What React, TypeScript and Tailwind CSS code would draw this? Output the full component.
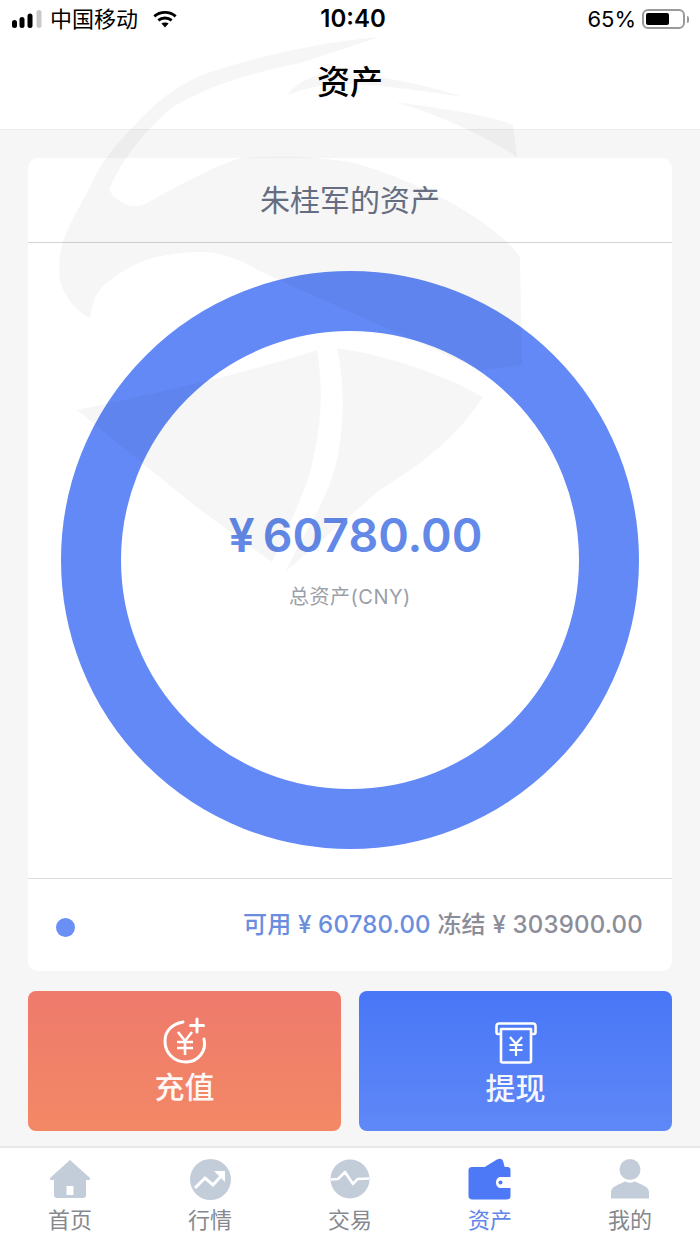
import React from "react";

const cjk = { fontFamily: '"Inter","Noto Sans CJK SC",sans-serif' };

function Watermark() {
  return (
    <svg className="absolute left-0 top-0 pointer-events-none" width="700" height="620" viewBox="0 0 700 620">
      <g fill="#000" fillOpacity="0.035">
        <path d="M380 37 C320 42 260 56 207 73 C170 88 150 108 133 127 C110 150 98 168 90 187 C75 215 62 235 60 257 C58 275 60 285 66 295 C72 305 80 314 90 318 L92 307 C95 295 100 288 107 283 C125 268 145 258 167 255 C185 252 200 251 213 253 C230 256 245 262 257 270 L290 285 L480 370 L522 365 L520 257 C505 235 470 212 433 193 C400 178 375 168 350 162 C320 157 280 155 240 158 C205 170 170 190 143 205 C135 207 128 206 123 203 C115 198 108 192 110 187 C125 155 145 130 173 107 C210 85 255 72 300 63 C325 55 355 45 380 37Z" />
        <path d="M287 95 C298 82 310 76 325 74 C350 70 420 82 463 97 C420 90 370 84 340 84 C320 85 300 90 287 95Z" />
        <path d="M395 102 C440 108 490 115 513 125 L517 157 C500 145 450 118 395 102Z" />
        <path d="M317 350 C250 372 150 395 77 410 L200 510 L272 562 L287 530 C300 500 310 480 314 455 C322 420 323 385 317 350Z" />
        <path d="M337 348 C390 356 445 375 483 397 C455 440 420 465 380 490 L285 572 L307 530 C322 505 333 480 338 455 C344 420 345 385 337 348Z" />
      </g>
    </svg>
  );
}

function Signal() {
  return (
    <svg width="30" height="18" viewBox="0 0 30 18">
      <rect x="0" y="10" width="5" height="8" rx="2.5" fill="#000" />
      <rect x="7.5" y="7" width="5" height="11" rx="2.5" fill="#000" />
      <rect x="15.5" y="3.5" width="5" height="14.5" rx="2.5" fill="#000" />
      <rect x="24.5" y="0" width="5" height="18" rx="2.5" fill="#c9c9c9" />
    </svg>
  );
}

function Wifi() {
  return (
    <svg width="24" height="18" viewBox="0 0 27 20" fill="none" stroke="#000" strokeWidth="3.2">
      <path d="M1.5 7 C8 1 19 1 25.5 7" />
      <path d="M6 11.5 C10 8 17 8 21 11.5" />
      <path d="M13.5 19.5 L9.5 15 C11.5 13.5 15.5 13.5 17.5 15Z" fill="#000" stroke="none" />
    </svg>
  );
}

function Battery() {
  return (
    <div className="flex items-center ml-[6px]">
      <div className="w-[43px] h-[20px] rounded-[6px] border-2 border-[#9a9a9a] p-[2px]">
        <div className="w-[23px] h-full rounded-[2px] bg-black" />
      </div>
      <div className="w-[2px] h-[7px] rounded-r-[2px] bg-[#9a9a9a] ml-[2px]" />
    </div>
  );
}

function Home() {
  return (
    <svg width="42" height="38" viewBox="0 0 42 38">
      <path fill="#c3cdda" d="M21 0 L41 18 C41.5 19 41 20 40 20 L37 20 L37 35 C37 37 36 38 34 38 L8 38 C6 38 5 37 5 35 L5 20 L2 20 C1 20 .5 19 1 18Z" />
      <rect x="17.5" y="26" width="7" height="9" fill="#fff" />
    </svg>
  );
}

function Market() {
  return (
    <svg width="41" height="41" viewBox="0 0 41 41">
      <circle cx="20.5" cy="20.5" r="20.5" fill="#c3cdda" />
      <path d="M5 29 L15 19 L23 26 L33 15" fill="none" stroke="#fff" strokeWidth="3" />
      <path d="M24 12 L35 12 L35 23Z" fill="#fff" />
    </svg>
  );
}

function Trade() {
  return (
    <svg width="40" height="40" viewBox="0 0 40 40">
      <circle cx="20" cy="20" r="19.5" fill="#c3cdda" />
      <path d="M1 20.5 L8 20 L15 13 L23 25 L27.5 20 L39 19.5" fill="none" stroke="#fff" strokeWidth="2.6" strokeLinejoin="round" />
    </svg>
  );
}

function Wallet() {
  return (
    <svg width="44" height="42" viewBox="0 0 44 42">
      <path fill="#4d79f6" d="M15 10 L29 1.5 C32 0 34 .5 35 3 L37 10Z" />
      <path fill="#4d79f6" d="M4 9 L39 9 C41.5 9 42.5 10.5 42.5 12 L42.5 38 C42.5 40 41 41.5 39 41.5 L4 41.5 C2 41.5 .5 40 .5 38 L.5 12 C.5 10 2 9 4 9Z" />
      <path fill="#fff" d="M33 19 L44 19 L44 30 L33 30 C30 30 28 28 28 24.5 C28 21 30 19 33 19Z" />
      <circle cx="32.5" cy="24.5" r="2" fill="#4d79f6" />
    </svg>
  );
}

function Person() {
  return (
    <svg width="40" height="40" viewBox="0 0 40 40">
      <circle cx="20" cy="10.5" r="10.5" fill="#c3cdda" />
      <path fill="#c3cdda" d="M1 39.5 L39 39.5 L39 33 C39 27 30 25.5 25 22.5 C22 24 18 24 15 22.5 C10 25.5 1 27 1 33Z" />
    </svg>
  );
}

function Recharge() {
  return (
    <svg width="48" height="48" viewBox="0 0 48 48" fill="none" stroke="#fff" strokeLinecap="round">
      <path d="M43 22 C46 34 37 45 25 45 C13 45 4 36 4 24 C4 14 11 7 22 5" strokeWidth="3" />
      <path d="M36 2 L36 15 M29.5 8.5 L42.5 8.5" strokeWidth="3" />
      <path d="M17 15 L24 24 L31 15 M16 25 L32 25 M16 31 L32 31 M24 24 L24 38" strokeWidth="2.6" strokeLinecap="butt" />
    </svg>
  );
}

function Withdraw() {
  return (
    <svg width="42" height="42" viewBox="0 0 42 42" fill="none" stroke="#fff">
      <path d="M6 12 L3 12 C2 12 1.5 11 1.5 10 L1.5 4 C1.5 2.5 2.5 1.5 4 1.5 L38 1.5 C39.5 1.5 40.5 2.5 40.5 4 L40.5 10 C40.5 11 40 12 39 12 L36 12" strokeWidth="2.6" />
      <path d="M6 7 L36 7 L36 39 C36 40 35 40.5 34 40.5 L8 40.5 C7 40.5 6 40 6 39Z" strokeWidth="2.6" strokeLinejoin="round" />
      <path d="M15 15 L21 22 L27 15 M14.5 23 L27.5 23 M14.5 28 L27.5 28 M21 22 L21 34" strokeWidth="2.2" />
    </svg>
  );
}

const tabs = [
  { label: "首页", icon: <Home />, active: false },
  { label: "行情", icon: <Market />, active: false },
  { label: "交易", icon: <Trade />, active: false },
  { label: "资产", icon: <Wallet />, active: true },
  { label: "我的", icon: <Person />, active: false },
];

export default function App() {
  return (
    <div className="relative w-[700px] h-[1246px] flex flex-col bg-[#f6f6f6] overflow-hidden" style={cjk}>
      <header className="h-[130px] bg-white border-b border-[#ececec] flex flex-col">
        <div className="h-[38px] flex items-center pl-[12px] pr-[11px] text-[22px] text-black relative">
          <Signal />
          <span className="ml-[8px] leading-none">中国移动</span>
          <span className="ml-[15px] flex"><Wifi /></span>
          <span className="absolute left-[6px] right-0 text-center font-semibold text-[24px] leading-none">10:40</span>
          <span className="ml-auto flex items-center">
            <span className="text-[22px] leading-none">65%</span>
            <Battery />
          </span>
        </div>
        <div className="flex-1 flex items-center justify-center pb-[3px] text-[33px] font-medium text-black leading-none">资产</div>
      </header>

      <main className="flex-1 flex flex-col px-[28px] pt-[28px]">
        <section className="h-[813px] bg-white rounded-[10px] flex flex-col">
          <div className="h-[85px] flex items-center justify-center border-b border-[#d4d4d6] text-[30px] text-[#6a7285] leading-none">朱桂军的资产</div>
          <div className="flex-1 flex items-center justify-center border-b border-[#dcdcdc] pb-[2px]">
            <div className="w-[578px] h-[578px] rounded-full border-[60px] border-[#6389f6] flex flex-col items-center justify-center">
              <div className="flex items-center text-[#6389e8] font-semibold text-[46.5px] leading-none mt-[0px] ml-[11px]">
                <span className="mr-[8px]">¥</span>
                <span>60780.00</span>
              </div>
              <div className="mt-[29px] text-[20px] text-[#9a9fa8] leading-none tracking-[0.5px]">总资产(CNY)</div>
            </div>
          </div>
          <div className="h-[92px] flex items-center justify-between pl-[28px] pr-[29px]">
            <span className="w-[19px] h-[19px] rounded-full bg-[#6a8ff5] mt-[4px]" />
            <div className="text-[24px] font-medium leading-none tracking-[0.2px]">
              <span className="text-[#6a8de0]">可用 ¥ 60780.00</span>
              <span className="text-[#8b8d99]"> 冻结 ¥ 303900.00</span>
            </div>
          </div>
        </section>

        <div className="mt-[20px] h-[140px] flex gap-[18px]">
          <button className="flex-1 rounded-[8px] bg-gradient-to-b from-[#ee7a6c] to-[#f38865] flex flex-col items-center pt-[26px] text-white/95 text-[30px] font-medium leading-none">
            <Recharge />
            <span className="mt-[7px]">充值</span>
          </button>
          <button className="flex-1 rounded-[8px] bg-gradient-to-b from-[#4876f6] to-[#5f88f7] flex flex-col items-center pt-[31px] text-white/95 text-[30px] font-medium leading-none">
            <Withdraw />
            <span className="mt-[9px]">提现</span>
          </button>
        </div>
      </main>

      <nav className="h-[100px] bg-white border-t-2 border-[#e8e8e8] flex">
        {tabs.map((t) => (
          <div key={t.label} className="flex-1 flex flex-col items-center pt-[10px]">
            <div className="h-[42px] flex items-center justify-center">{t.icon}</div>
            <span className={"mt-[9px] text-[22px] leading-none " + (t.active ? "text-[#5f86e8]" : "text-[#85888e]")}>{t.label}</span>
          </div>
        ))}
      </nav>

      <Watermark />
    </div>
  );
}
